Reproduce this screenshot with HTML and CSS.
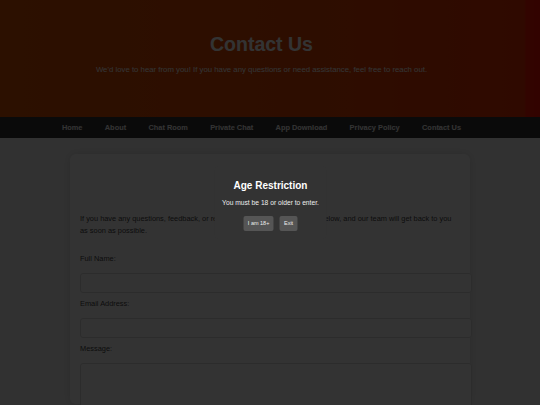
FILE: index.html
```html
<!DOCTYPE html>
<html lang="en">
<head>
<meta charset="utf-8">
<title>Contact Us</title>
<link rel="stylesheet" href="styles.css">
</head>
<body>
<header class="hero">
  <h1 class="hero-title">Contact Us</h1>
  <p class="hero-sub">We'd love to hear from you! If you have any questions or need assistance, feel free to reach out.</p>
</header>
<nav class="nav">
  <a href="#">Home</a>
  <a href="#">About</a>
  <a href="#">Chat Room</a>
  <a href="#">Private Chat</a>
  <a href="#">App Download</a>
  <a href="#">Privacy Policy</a>
  <a href="#">Contact Us</a>
</nav>
<main class="card">
  <p class="intro">If you have any questions, feedback, or reach out to us by using the form below, and our team will get back to you as soon as possible.</p>
  <form class="form">
    <label class="label" for="name">Full Name:</label>
    <input class="input" id="name" type="text">
    <label class="label" for="email">Email Address:</label>
    <input class="input" id="email" type="email">
    <label class="label" for="msg">Message:</label>
    <textarea class="input textarea" id="msg"></textarea>
  </form>
</main>
<div class="overlay">
  <div class="modal">
    <h2 class="modal-title">Age Restriction</h2>
    <p class="modal-text">You must be 18 or older to enter.</p>
    <div class="modal-actions">
      <button class="btn" type="button">I am 18+</button>
      <button class="btn" type="button">Exit</button>
    </div>
  </div>
</div>
</body>
</html>
```
FILE: styles.css
```css
* { box-sizing: border-box; }
html, body { margin: 0; padding: 0; }
body {
  font-family: "Liberation Sans", Arial, sans-serif;
  background: #f4f4f4;
  color: #444;
  height: 405px;
  overflow: hidden;
}
.hero {
  height: 117px;
  padding: 33px 17px 0 0;
  text-align: center;
  color: #fff;
  background: linear-gradient(to right, #da5000 0%, #e24200 60%, #ea3000 97%, #f81800 97.5%, #fa1000 100%);
}
.hero-title {
  margin: 0;
  font-size: 19.5px;
  line-height: 23px;
  font-weight: bold;
}
.hero-sub {
  margin: 9px 0 0;
  font-size: 7.8px;
  line-height: 9px;
}
.nav {
  height: 21px;
  background: #333;
  display: flex;
  justify-content: center;
  align-items: center;
  gap: 22.3px;
  padding-right: 17px;
}
.nav a {
  color: #fff;
  text-decoration: none;
  font-weight: bold;
  font-size: 7.4px;
}
.card {
  width: 400px;
  margin: 16px auto 0;
  background: #fff;
  border-radius: 6px;
  box-shadow: 0 0 8px rgba(0,0,0,0.12);
  padding: 59px 10px 10px;
  height: 250px;
}
.intro {
  margin: 0 0 16.5px;
  font-size: 7.4px;
  line-height: 12px;
}
.form { display: block; }
.label {
  display: block;
  font-size: 7.4px;
  line-height: 9px;
  height: 9px;
  margin-bottom: 10px;
}
.input {
  display: block;
  width: calc(100% + 12px);
  height: 20px;
  margin: 0 0 6px;
  padding: 5px;
  border: 1px solid #ddd;
  border-radius: 3px;
  background: #fff;
  font-family: inherit;
}
.textarea {
  height: 60px;
  resize: none;
}
.overlay {
  position: fixed;
  inset: 0;
  background: rgba(0,0,0,0.8);
  display: flex;
  align-items: center;
  justify-content: center;
}
.modal {
  background: #333;
  padding: 14px 7.5px 8px;
  text-align: center;
  color: #fff;
  border-radius: 4px;
  transform: translateX(0.5px);
}
.modal-title {
  margin: 0 0 7px;
  font-size: 10px;
  line-height: 12px;
  font-weight: bold;
}
.modal-text {
  margin: 0 0 9px;
  font-size: 6.7px;
  line-height: 8px;
  color: #eee;
}
.modal-actions {
  display: flex;
  justify-content: center;
  gap: 6px;
}
.btn {
  font-family: inherit;
  font-size: 5.5px;
  line-height: 6.5px;
  padding: 4.25px 4.3px;
  border: none;
  border-radius: 2px;
  background: #555;
  color: #eee;
}
```
